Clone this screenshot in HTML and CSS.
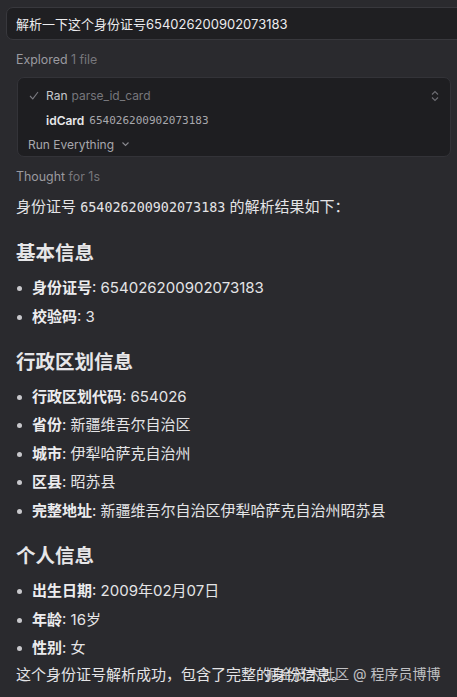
FILE: index.html
```html
<!DOCTYPE html>
<html lang="zh-CN">
<head>
    <meta charset="UTF-8">
    <meta name="viewport" content="width=device-width, initial-scale=1.0">
    <title>身份证号解析</title>
    <link rel="stylesheet" href="styles.css">
</head>
<body>
    <div class="chat">
        <div class="prompt">解析一下这个身份证号654026200902073183</div>

        <div class="meta">Explored <span class="dim">1 file</span></div>

        <div class="tool-card">
            <div class="tool-row">
                <svg class="check" width="10" height="9" viewBox="0 0 10 9"><path d="M1 5 L3.8 7.8 L9 1" fill="none" stroke="#7a7a80" stroke-width="1.1"/></svg>
                <span class="ran">Ran</span>
                <span class="tool-name">parse_id_card</span>
                <svg class="updown" width="8" height="12" viewBox="0 0 8 12"><path d="M1 4.5 L4 1.5 L7 4.5 M1 7.5 L4 10.5 L7 7.5" fill="none" stroke="#6d6d73" stroke-width="1.1"/></svg>
            </div>
            <div class="tool-row arg">
                <span class="arg-name">idCard</span>
                <span class="arg-value">654026200902073183</span>
            </div>
            <div class="tool-row run-all">
                Run Everything
                <svg width="9" height="6" viewBox="0 0 9 6"><path d="M1.5 1.5 L4.5 4.5 L7.5 1.5" fill="none" stroke="#8a8a90" stroke-width="1.1"/></svg>
            </div>
        </div>

        <div class="meta thought">Thought <span class="dim">for 1s</span></div>

        <div class="answer">
            <p class="intro">身份证号 <code>654026200902073183</code> 的解析结果如下：</p>

            <h2>基本信息</h2>
            <ul>
                <li><b>身份证号</b>: 654026200902073183</li>
                <li><b>校验码</b>: 3</li>
            </ul>

            <h2>行政区划信息</h2>
            <ul>
                <li><b>行政区划代码</b>: 654026</li>
                <li><b>省份</b>: 新疆维吾尔自治区</li>
                <li><b>城市</b>: 伊犁哈萨克自治州</li>
                <li><b>区县</b>: 昭苏县</li>
                <li><b>完整地址</b>: 新疆维吾尔自治区伊犁哈萨克自治州昭苏县</li>
            </ul>

            <h2>个人信息</h2>
            <ul>
                <li><b>出生日期</b>: 2009年02月07日</li>
                <li><b>年龄</b>: 16岁</li>
                <li><b>性别</b>: 女</li>
            </ul>

            <p class="outro">这个身份证号解析成功，包含了完整的身份信息。</p>
        </div>
    </div>

    <div class="watermark">掘金技术社区 @ 程序员博博</div>
</body>
</html>
```

FILE: styles.css
```css
:root {
    --bg: #2a2a2e;
    --panel: #1f1f22;
    --border: #38383d;
    --text: #e4e4e6;
    --muted: #77777c;
    --font: "Inter", "Noto Sans CJK SC", sans-serif;
    --mono: "DejaVu Sans Mono", "Noto Sans CJK SC", monospace;
}

html, body {
    margin: 0;
    background: var(--bg);
    overflow: hidden;
}

body {
    color: var(--text);
    font-family: var(--font);
    font-size: 15px;
    min-height: 697px;
    position: relative;
}

.chat {
    padding: 7px 0 0 16px;
}

.prompt {
    margin: 0 -30px 0 -10px;
    height: 33px;
    box-sizing: border-box;
    padding-left: 9px;
    display: flex;
    align-items: center;
    background: var(--panel);
    border: 1px solid var(--border);
    border-radius: 7px;
    font-size: 13px;
    color: #ececee;
}

.meta {
    margin-top: 11px;
    line-height: 18px;
    font-size: 12.4px;
    color: #9a9aa0;
}

.meta .dim {
    color: var(--muted);
}

.tool-card {
    margin: 8px 6px 0 1px;
    height: 80px;
    box-sizing: border-box;
    padding: 5px 10px 0 10px;
    background: #1e1e21;
    border: 1px solid #333338;
    border-radius: 7px;
    font-size: 12px;
}

.tool-row {
    display: flex;
    align-items: center;
    height: 25px;
}

.check {
    margin: 0 7px 0 1px;
}

.ran {
    color: #c8c8cc;
    margin-right: 4px;
}

.tool-name {
    color: var(--muted);
}

.updown {
    margin-left: auto;
    margin-right: 1px;
}

.arg {
    padding-left: 18px;
}

.arg-name {
    font-weight: 600;
    color: #e8e8ea;
    margin-right: 5px;
}

.arg-value {
    font-family: var(--mono);
    font-size: 11px;
    color: #a8a8ad;
}

.run-all {
    height: 22px;
    color: #a8a8ad;
    gap: 7px;
}

.thought {
    margin-top: 11px;
}

.answer p {
    margin: 0;
    line-height: 22px;
}

.intro {
    margin-top: 10px !important;
}

code {
    font-family: var(--mono);
    font-size: 13.4px;
}

h2 {
    margin: 21px 0 0;
    font-size: 19.5px;
    line-height: 26px;
    font-weight: 700;
    color: #e6e6e8;
}

ul {
    list-style: none;
    margin: 11px 0 0;
    padding: 0;
}

li {
    position: relative;
    line-height: 22px;
    padding-left: 16px;
    margin-top: 6.6px;
}

li:first-child {
    margin-top: 0;
}

li::before {
    content: "";
    position: absolute;
    left: 1px;
    top: 9px;
    width: 5px;
    height: 5px;
    border-radius: 50%;
    background: #c8c8cc;
}

li b {
    font-weight: 700;
    color: #ececee;
}

.outro {
    margin-top: 5px !important;
}

.watermark {
    position: absolute;
    left: 265px;
    top: 663px;
    font-size: 14px;
    line-height: 22px;
    color: rgba(236, 236, 238, 0.78);
    font-family: var(--font);
}
```
